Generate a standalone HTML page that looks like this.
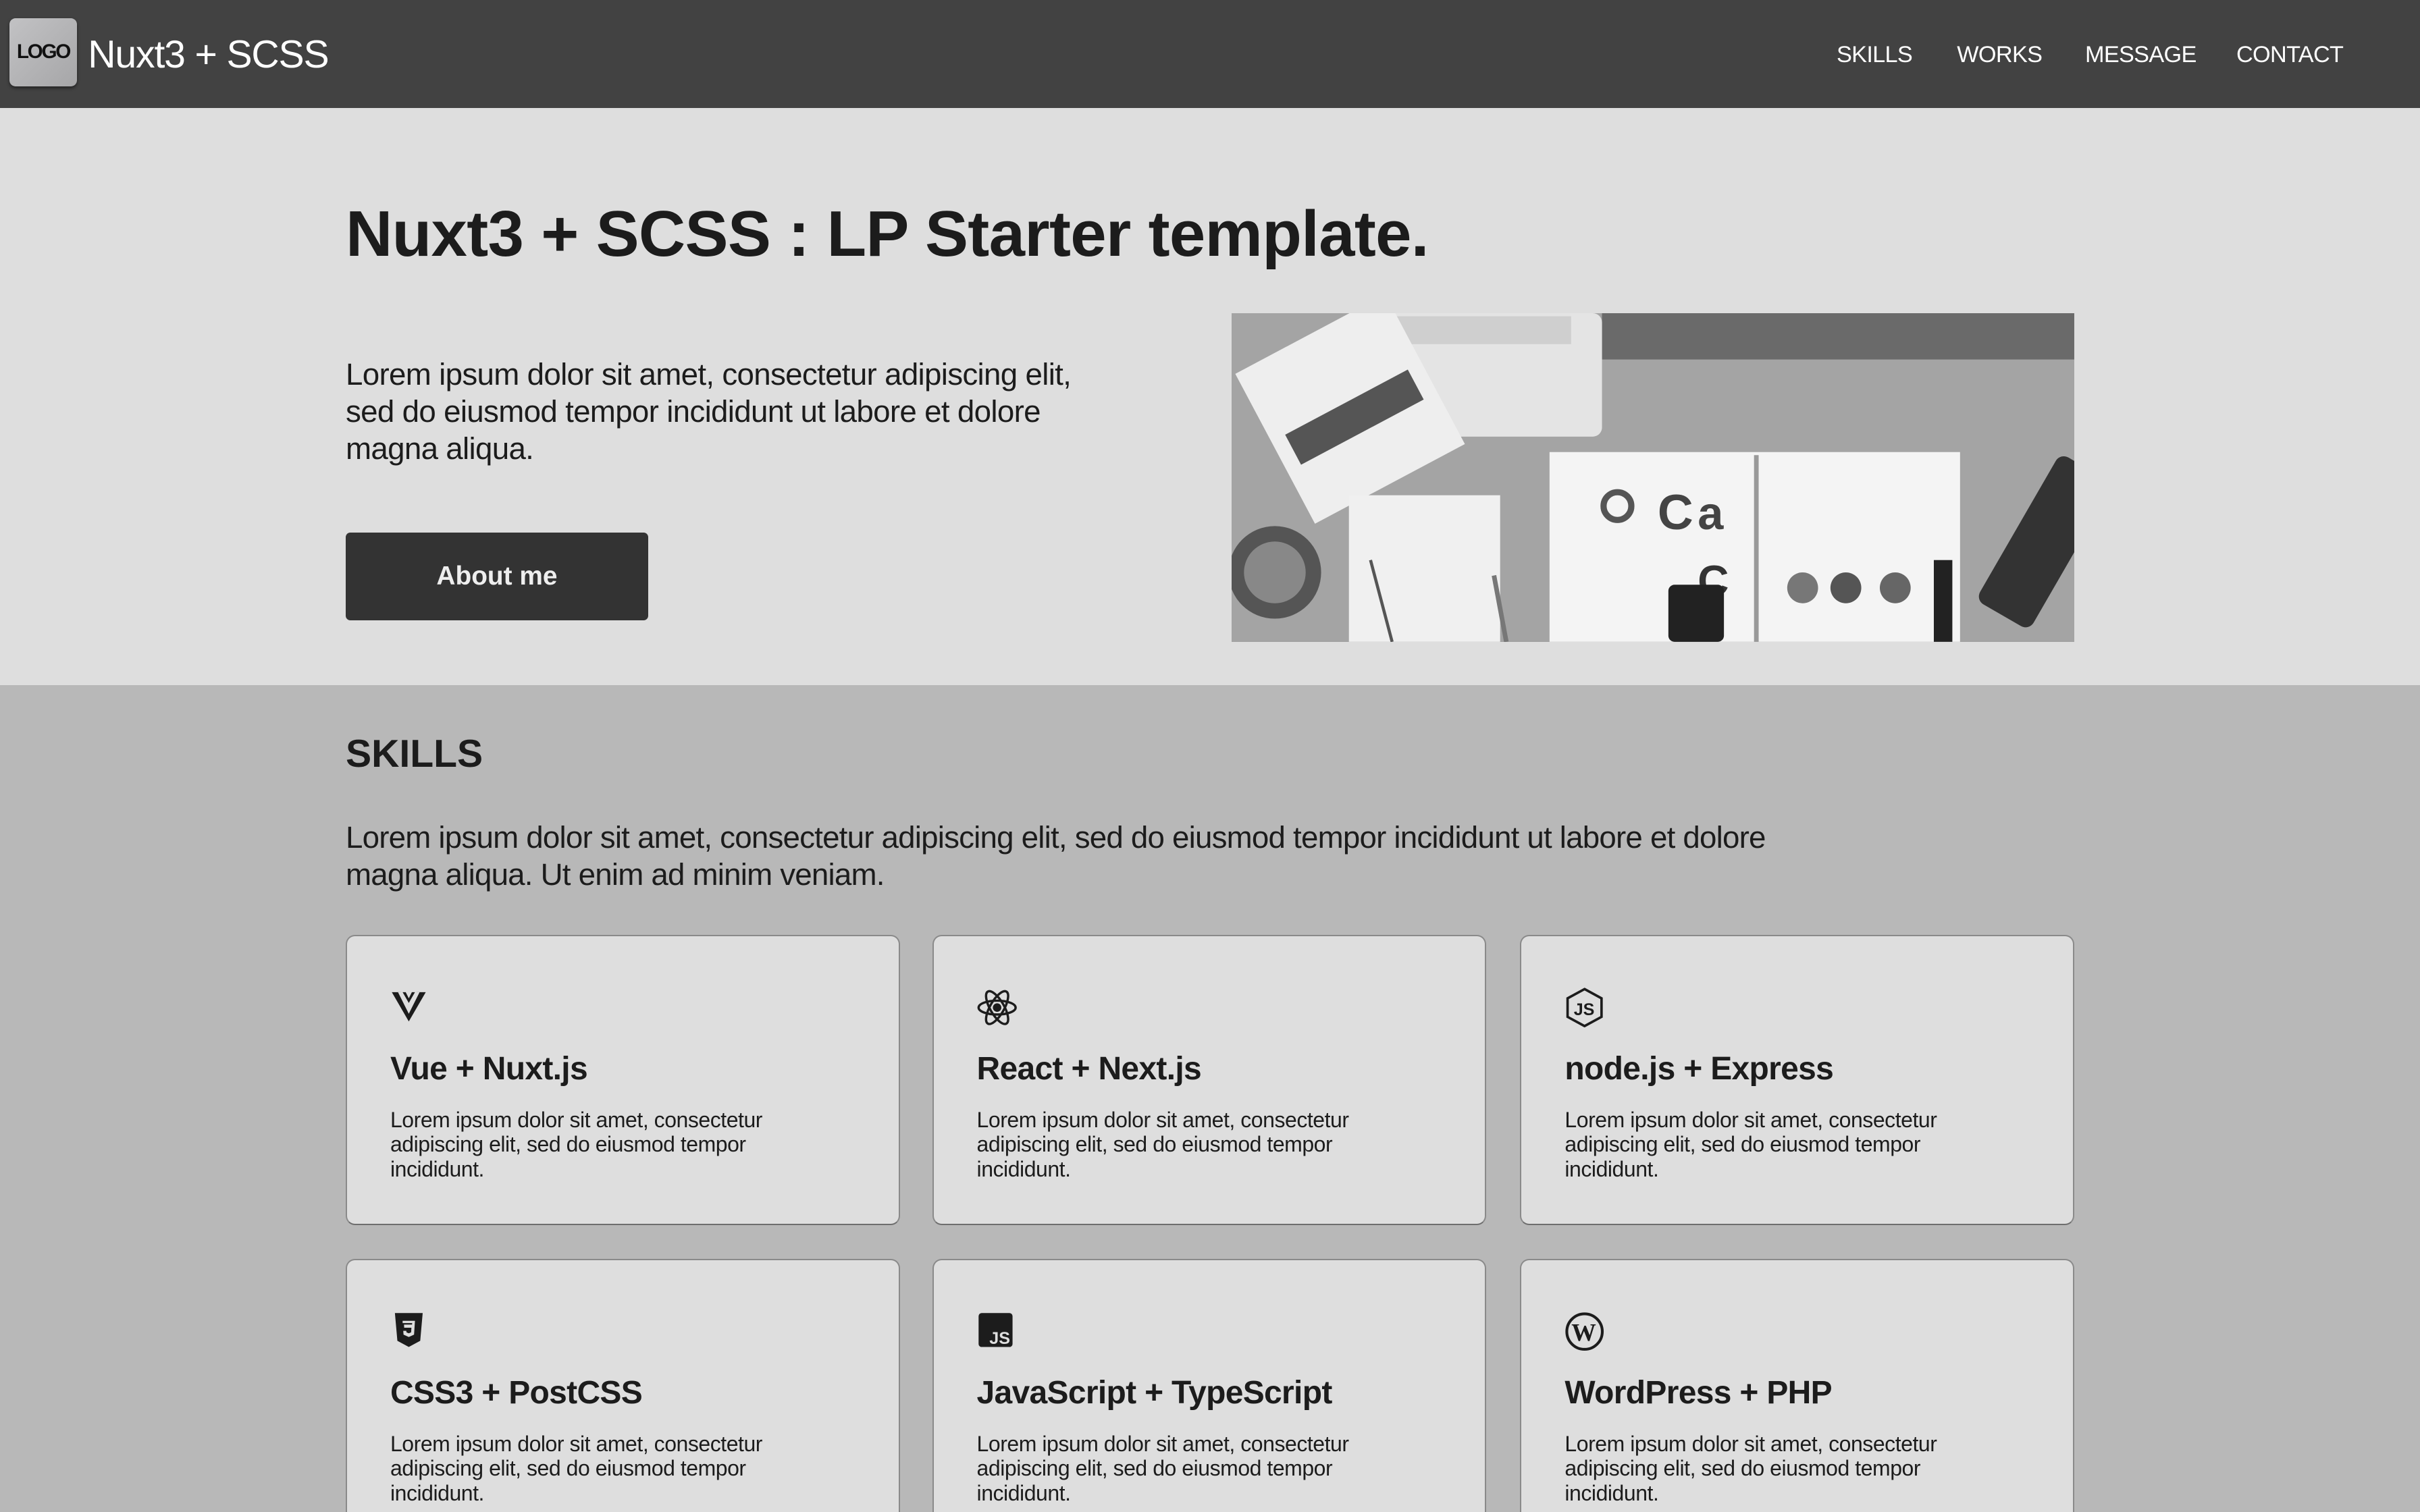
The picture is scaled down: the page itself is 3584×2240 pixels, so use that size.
<!DOCTYPE html>
<html><head><meta charset="utf-8"><style>
*{box-sizing:border-box;margin:0;padding:0}
html,body{width:3584px;height:2240px;overflow:hidden}
body{background:#b8b8b8;font-family:"Liberation Sans",sans-serif;color:#1c1c1c}
#w{zoom:2.285714;width:1568px;height:980px;position:relative;overflow:hidden}
header{position:absolute;left:0;top:0;width:1568px;height:70px;background:#424242}
.logo{position:absolute;left:6px;top:12px;width:44px;height:44px;border-radius:4px;background:linear-gradient(135deg,#c2c2c4,#a6a6a8);box-shadow:0 1px 2px rgba(0,0,0,.5);font-size:13px;font-weight:bold;color:#111;text-align:center;line-height:44px;letter-spacing:-1px}
.brand{position:absolute;left:57px;top:19px;font-size:25px;color:#fff;line-height:34px;letter-spacing:-.5px}
nav a{position:absolute;top:26px;font-size:15px;color:#fff;text-decoration:none;line-height:20px;letter-spacing:-.3px}
.hero{position:absolute;left:0;top:70px;width:1568px;height:374px;background:#dedede}
h1{position:absolute;left:224px;top:126px;font-size:42px;font-weight:bold;line-height:52px;letter-spacing:-.3px}
.hp{position:absolute;left:224px;top:231px;width:600px;font-size:20px;line-height:24px;letter-spacing:-.3px}
.btn{position:absolute;left:224px;top:345px;width:196px;height:57px;background:#333;border-radius:3px;color:#eee;font-weight:bold;font-size:17px;text-align:center;line-height:57px}
.img{position:absolute;left:798px;top:203px;width:546px;height:213px;background:#9a9a9a;overflow:hidden}
h2{position:absolute;left:224px;top:473px;font-size:25px;font-weight:bold;line-height:32px}
.sp{position:absolute;left:224px;top:531px;width:1200px;font-size:20px;line-height:24px;letter-spacing:-.35px}
.card{position:absolute;width:359px;height:188px;background:#dedede;border:1px solid #8a8a8a;border-bottom-color:#6e6e6e;border-radius:6px}
.card svg{position:absolute;left:28px;top:33px}
.card h3{position:absolute;left:28px;top:72px;font-size:21px;line-height:28px;font-weight:bold;letter-spacing:-.3px}
.card p{position:absolute;left:28px;top:111px;width:320px;font-size:14px;line-height:16px;letter-spacing:-.2px}
</style></head><body><div id="w">
<header><div class="logo">LOGO</div><div class="brand">Nuxt3 + SCSS</div>
<nav><a style="left:1190px">SKILLS</a><a style="left:1268px">WORKS</a><a style="left:1351px">MESSAGE</a><a style="left:1449px">CONTACT</a></nav></header>
<div class="hero"></div>
<h1>Nuxt3 + SCSS : LP Starter template.</h1>
<div class="hp">Lorem ipsum dolor sit amet, consectetur adipiscing elit,<br>sed do eiusmod tempor incididunt ut labore et dolore<br>magna aliqua.</div>
<div class="btn">About me</div>
<div class="img"><svg width="546" height="213" viewBox="0 0 546 213">
<rect width="546" height="213" fill="#a4a4a4"/>
<rect x="240" y="0" width="306" height="30" fill="#6a6a6a"/>
<rect x="90" y="0" width="150" height="80" rx="6" fill="#e4e4e4"/>
<rect x="100" y="2" width="120" height="18" fill="#cfcfcf"/>
<g transform="rotate(-28 70 60)"><rect x="20" y="10" width="110" height="110" fill="#eee"/><rect x="30" y="60" width="90" height="22" fill="#555"/></g>
<rect x="76" y="118" width="98" height="95" fill="#f0f0f0"/>
<rect x="206" y="90" width="266" height="123" fill="#f4f4f4"/>
<line x1="340" y1="92" x2="340" y2="213" stroke="#999" stroke-width="3"/>
<circle cx="250" cy="125" r="9" fill="none" stroke="#555" stroke-width="4"/>
<text x="276" y="140" font-size="32" font-weight="bold" fill="#444">C</text>
<text x="302" y="140" font-size="30" font-weight="bold" fill="#444">a</text>
<text x="302" y="183" font-size="28" font-weight="bold" fill="#333">C</text>
<rect x="283" y="176" width="36" height="37" rx="4" fill="#222"/>
<circle cx="370" cy="178" r="10" fill="#777"/><circle cx="398" cy="178" r="10" fill="#555"/><circle cx="430" cy="178" r="10" fill="#666"/>
<rect x="455" y="160" width="12" height="53" fill="#222"/>
<g transform="rotate(30 520 150)"><rect x="505" y="90" width="40" height="110" rx="6" fill="#333"/></g>
<circle cx="28" cy="168" r="30" fill="#555"/><circle cx="28" cy="168" r="20" fill="#888"/>
<line x1="90" y1="160" x2="104" y2="213" stroke="#555" stroke-width="2"/>
<line x1="170" y1="170" x2="178" y2="213" stroke="#777" stroke-width="3"/>
</svg></div>
<h2>SKILLS</h2>
<div class="sp">Lorem ipsum dolor sit amet, consectetur adipiscing elit, sed do eiusmod tempor incididunt ut labore et dolore<br>magna aliqua. Ut enim ad minim veniam.</div>

<div class="card" style="left:224px;top:606px"><svg width="24" height="24" viewBox="0 0 24 24"><path d="M1 3h6l5 8 5-8h6L12 22z" fill="#1c1c1c"/><path d="M5 3h3l4 7 4-7h3L12 17z" fill="#dedede"/><path d="M8 3h2l2 4 2-4h2l-4 7z" fill="#1c1c1c"/></svg><h3>Vue + Nuxt.js</h3><p>Lorem ipsum dolor sit amet, consectetur<br>adipiscing elit, sed do eiusmod tempor<br>incididunt.</p></div>
<div class="card" style="left:604px;top:606px"><svg width="26" height="26" viewBox="0 0 26 26" fill="none" stroke="#1c1c1c" stroke-width="1.5"><ellipse cx="13" cy="13" rx="12" ry="4.5"/><ellipse cx="13" cy="13" rx="12" ry="4.5" transform="rotate(60 13 13)"/><ellipse cx="13" cy="13" rx="12" ry="4.5" transform="rotate(120 13 13)"/><circle cx="13" cy="13" r="2" fill="#1c1c1c"/></svg><h3>React + Next.js</h3><p>Lorem ipsum dolor sit amet, consectetur<br>adipiscing elit, sed do eiusmod tempor<br>incididunt.</p></div>
<div class="card" style="left:985px;top:606px"><svg width="26" height="26" viewBox="0 0 26 26"><path d="M13 1l11 6v12l-11 6-11-6V7z" fill="none" stroke="#1c1c1c" stroke-width="1.6"/><text x="6" y="18" font-size="11" font-weight="bold" fill="#1c1c1c" font-family="Liberation Sans">JS</text></svg><h3>node.js + Express</h3><p>Lorem ipsum dolor sit amet, consectetur<br>adipiscing elit, sed do eiusmod tempor<br>incididunt.</p></div>

<div class="card" style="left:224px;top:816px"><svg width="24" height="24" viewBox="0 0 24 24"><path d="M3 1h18l-1.6 18L12 23l-7.4-4z" fill="#1c1c1c"/><path d="M8 6h8l-.6 9-3.4 1.5-3.4-1.5-.2-2.5h2l.1 1 1.5.6 1.5-.6.2-3H9l-.1-2h5.2l.1-1H8z" fill="#dedede"/></svg><h3>CSS3 + PostCSS</h3><p>Lorem ipsum dolor sit amet, consectetur<br>adipiscing elit, sed do eiusmod tempor<br>incididunt.</p></div>
<div class="card" style="left:604px;top:816px"><svg width="24" height="24" viewBox="0 0 24 24"><rect x="1" y="1" width="22" height="22" rx="2" fill="#1c1c1c"/><text x="8" y="21" font-size="11" font-weight="bold" fill="#dedede" font-family="Liberation Sans">JS</text></svg><h3>JavaScript + TypeScript</h3><p>Lorem ipsum dolor sit amet, consectetur<br>adipiscing elit, sed do eiusmod tempor<br>incididunt.</p></div>
<div class="card" style="left:985px;top:816px"><svg width="26" height="26" viewBox="0 0 26 26"><circle cx="13" cy="13" r="11.5" fill="none" stroke="#1c1c1c" stroke-width="1.8"/><text x="4.5" y="19" font-size="16" font-weight="bold" fill="#1c1c1c" font-family="Liberation Serif">W</text></svg><h3>WordPress + PHP</h3><p>Lorem ipsum dolor sit amet, consectetur<br>adipiscing elit, sed do eiusmod tempor<br>incididunt.</p></div>
</div></body></html>
